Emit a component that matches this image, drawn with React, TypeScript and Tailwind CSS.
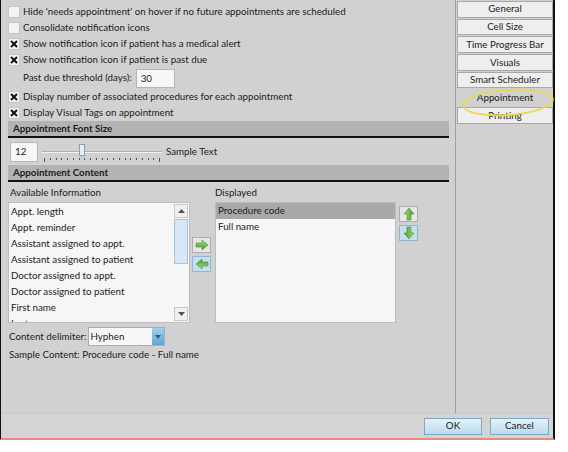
import React from 'react'

const availableItems = [
  'Appt. length',
  'Appt. reminder',
  'Assistant assigned to appt.',
  'Assistant assigned to patient',
  'Doctor assigned to appt.',
  'Doctor assigned to patient',
  'First name',
  'Last name',
]

const tabs = ['General', 'Cell Size', 'Time Progress Bar', 'Visuals', 'Smart Scheduler', 'Appointment', 'Printing']

function CheckBox({ checked }: { checked: boolean }) {
  return (
    <span className="w-[12px] h-[12px] flex-shrink-0 border border-[#c4c4c4] bg-[#f3f3f3] flex items-center justify-center">
      {checked && (
        <svg width="8" height="8" viewBox="0 0 8 8">
          <path d="M1 1 L7 7 M7 1 L1 7" stroke="#111" strokeWidth="2" />
        </svg>
      )}
    </span>
  )
}

function CheckRow({ checked, label }: { checked: boolean; label: string }) {
  return (
    <div className="h-[16px] flex items-center gap-[3px]">
      <CheckBox checked={checked} />
      <span className="leading-none">{label}</span>
    </div>
  )
}

function SectionHeader({ title }: { title: string }) {
  return (
    <div className="h-[17px] bg-[#b3b3b3] border-b-2 border-[#111] flex items-center pl-[5px] font-bold leading-none">
      {title}
    </div>
  )
}

function Arrow({ dir }: { dir: 'right' | 'left' | 'up' | 'down' }) {
  const rot = { right: 0, left: 180, up: 270, down: 90 }[dir]
  return (
    <svg width="14" height="12" viewBox="0 0 14 12" style={{ transform: `rotate(${rot}deg)` }}>
      <defs>
        <linearGradient id={`g-${dir}`} x1="0" y1="0" x2="0" y2="1">
          <stop offset="0" stopColor="#a6e07a" />
          <stop offset="1" stopColor="#3f9a2a" />
        </linearGradient>
      </defs>
      <path d="M1 4 H7 V1 L13 6 L7 11 V8 H1 Z" fill={`url(#g-${dir})`} stroke="#4c8f35" strokeWidth="0.6" />
    </svg>
  )
}

function ArrowButton({ dir, blue }: { dir: 'right' | 'left' | 'up' | 'down'; blue?: boolean }) {
  return (
    <div
      className={`w-[19px] h-[16px] border flex items-center justify-center ${
        blue ? 'bg-[#c3e0f0] border-[#8fb6cc]' : 'bg-[#e6e6e6] border-[#adadad]'
      }`}
    >
      <Arrow dir={dir} />
    </div>
  )
}

function ScrollArrow({ up }: { up?: boolean }) {
  return (
    <div className="h-[14px] w-[14px] bg-[#f0f0f0] border border-[#c8c8c8] flex items-center justify-center">
      <svg width="7" height="4" viewBox="0 0 7 4">
        <path d={up ? 'M0 4 L3.5 0 L7 4 Z' : 'M0 0 L3.5 4 L7 0 Z'} fill="#555" />
      </svg>
    </div>
  )
}

export default function App() {
  return (
    <div className="w-[568px] h-[452px] bg-white font-['Lato',sans-serif] text-[9.75px] text-[#1b1b1b]">
      <div className="w-[555px] h-[440px] border-l border-r-2 border-[#111] border-b-2 border-b-[#ea8a80] flex flex-col bg-[#d1d1d1]">
        <div className="flex flex-1 min-h-0">
          {/* left settings pane */}
          <div className="flex-1 pl-[7px] pr-[6px] pt-[4px] flex flex-col">
            <CheckRow checked={false} label="Hide 'needs appointment' on hover if no future appointments are scheduled" />
            <CheckRow checked={false} label="Consolidate notification icons" />
            <CheckRow checked label="Show notification icon if patient has a medical alert" />
            <CheckRow checked label="Show notification icon if patient is past due" />
            <div className="h-[22px] flex items-center pl-[15px] gap-[4px] mt-[-1px]">
              <span className="leading-none">Past due threshold (days):</span>
              <div className="w-[39px] h-[19px] bg-[#f7f7f7] border border-[#b5b5b5] flex items-center pl-[4px]">30</div>
            </div>
            <CheckRow checked label="Display number of associated procedures for each appointment" />
            <CheckRow checked label="Display Visual Tags on appointment" />

            <SectionHeader title="Appointment Font Size" />
            <div className="h-[27px] flex items-center pl-[2px] gap-[4px]">
              <div className="w-[28px] h-[20px] bg-[#f7f7f7] border border-[#b5b5b5] flex items-center pl-[4px]">12</div>
              <div className="w-[120px] h-[20px] flex flex-col justify-center relative">
                <div className="h-[2px] bg-[#f2f2f2] border-t border-[#b0b0b0]" />
                <div className="absolute left-[37px] top-[2px] w-[6px] h-[12px] bg-[#e4eef6] border border-[#8aa2b8]" />
                <div className="absolute left-[2px] right-[2px] top-[16px] flex justify-between">
                  {Array.from({ length: 21 }).map((_, i) => (
                    <span key={i} className={`w-px bg-[#555] ${i === 0 || i === 20 ? 'h-[4px]' : 'h-[2px]'}`} />
                  ))}
                </div>
              </div>
              <span className="leading-none">Sample Text</span>
            </div>

            <SectionHeader title="Appointment Content" />
            <div className="flex mt-[4px]">
              <div className="flex flex-col">
                <span className="leading-none ml-[2px] h-[14px] flex items-center">Available Information</span>
                <div className="w-[182px] h-[121px] mt-[2px] bg-[#f6f6f6] border border-[#bdbdbd] flex">
                  <div className="flex-1 overflow-hidden pt-[1px]">
                    {availableItems.map((item) => (
                      <div key={item} className="h-[16px] flex items-center pl-[2px] leading-none whitespace-nowrap">
                        {item}
                      </div>
                    ))}
                  </div>
                  <div className="w-[15px] flex flex-col bg-[#f6f6f6] pt-[1px] pb-[1px] pr-[1px]">
                    <ScrollArrow up />
                    <div className="mt-[1px] h-[45px] w-[14px] bg-[#d7e7f5] border border-[#a9c3da]" />
                    <div className="flex-1" />
                    <ScrollArrow />
                  </div>
                </div>
              </div>
              <div className="flex flex-col gap-[3px] ml-[2px] mt-[51px]">
                <ArrowButton dir="right" />
                <ArrowButton dir="left" blue />
              </div>
              <div className="flex flex-col ml-[4px]">
                <span className="leading-none h-[14px] flex items-center">Displayed</span>
                <div className="w-[181px] h-[121px] mt-[2px] bg-[#f6f6f6] border border-[#bdbdbd]">
                  <div className="h-[16px] bg-[#a9a9a9] flex items-center pl-[2px] leading-none">Procedure code</div>
                  <div className="h-[16px] flex items-center pl-[2px] leading-none">Full name</div>
                </div>
              </div>
              <div className="flex flex-col gap-[3px] ml-[3px] mt-[20px]">
                <ArrowButton dir="up" />
                <ArrowButton dir="down" blue />
              </div>
            </div>

            <div className="flex items-center mt-[4px] ml-[1px] gap-[1px]">
              <span className="leading-none">Content delimiter:</span>
              <div className="w-[77px] h-[19px] bg-[#f7f7f7] border border-[#acacac] flex items-center">
                <span className="flex-1 pl-[2px] leading-none">Hyphen</span>
                <div className="w-[12px] h-full bg-gradient-to-b from-[#9fd0ee] to-[#5ba8d8] flex items-center justify-center">
                  <svg width="6" height="4" viewBox="0 0 6 4">
                    <path d="M0 0 L3 4 L6 0 Z" fill="#2f5f80" />
                  </svg>
                </div>
              </div>
            </div>
            <div className="mt-[4px] ml-[1px] leading-none">Sample Content: Procedure code - Full name</div>
          </div>

          {/* right tab list */}
          <div className="w-[98px] border-l border-[#9e9e9e] relative flex flex-col gap-[1px] pt-[1px] pl-[1px]">
            {tabs.map((t) => (
              <div
                key={t}
                className={`h-[16.7px] flex items-center justify-center leading-none ${
                  t === 'Appointment' ? 'bg-[#d1d1d1]' : 'bg-[#eeeeee] border border-[#a8a8a8]'
                }`}
              >
                {t}
              </div>
            ))}
            <div className="absolute left-[6px] top-[89px] w-[92px] h-[27px] rounded-[50%] border-2 border-[#ecd84a] rotate-[-4deg]" />
          </div>
        </div>

        {/* footer */}
        <div className="h-[25px] bg-[#d4d4d4] border-t border-[#cbcbcb] flex items-center justify-end gap-[8px] pr-[4px]">
          <div className="w-[58px] h-[17px] bg-gradient-to-b from-[#e4f1f9] to-[#b9dcef] border border-[#7fa7c0] flex items-center justify-center leading-none">
            OK
          </div>
          <div className="w-[59px] h-[17px] bg-gradient-to-b from-[#e4f1f9] to-[#b9dcef] border border-[#7fa7c0] flex items-center justify-center leading-none">
            Cancel
          </div>
        </div>
      </div>
    </div>
  )
}
